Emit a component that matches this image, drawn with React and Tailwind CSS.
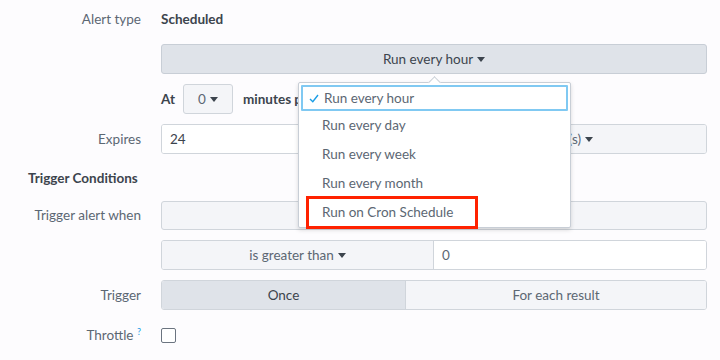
import React from "react";

const Caret = () => (
  <svg width="8" height="5" viewBox="0 0 8 5" className="inline-block ml-[4px] align-middle">
    <path d="M0 0 L8 0 L4 5 Z" fill="#3c444d" />
  </svg>
);

function Row({ label, children }) {
  return (
    <div className="flex items-center h-[30px]">
      <div className="w-[141px] text-right text-[#5c6773]">{label}</div>
      <div className="ml-[20px] w-[546px] h-full flex items-center">{children}</div>
    </div>
  );
}

export default function App() {
  return (
    <div
      className="relative w-[720px] h-[360px] bg-[#fdfcfe] overflow-hidden text-[13.5px] text-[#5c6773]"
      style={{ fontFamily: "Lato, 'Open Sans', sans-serif" }}
    >
      <div className="flex flex-col gap-[10px] pt-[4px]">
        <Row label="Alert type">
          <span className="font-bold text-[#3c444d]">Scheduled</span>
        </Row>
        <Row label="">
          <div className="w-full h-full rounded-[3px] border border-[#c8ced6] bg-[#dfe3e9] flex items-center justify-center text-[#3c444d]">
            Run every hour <Caret />
          </div>
        </Row>
        <Row label="">
          <span className="font-bold text-[#3c444d]">At</span>
          <div className="ml-[8px] w-[50px] h-full rounded-[3px] border border-[#d0d5db] bg-[#f4f5f8] flex items-center justify-center text-[#5c6773]">
            0 <Caret />
          </div>
          <span className="ml-[10px] font-bold text-[#3c444d]">minutes past the hour</span>
        </Row>
        <Row label="Expires">
          <div className="w-full h-full rounded-[3px] border border-[#d0d5db] flex overflow-hidden">
            <div className="w-[271px] bg-white flex items-center pl-[8px] text-[#3c444d]">24</div>
            <div className="flex-1 bg-[#f4f5f8] border-l border-[#d0d5db] flex items-center justify-center pr-[6px]">hour(s) <Caret /></div>
          </div>
        </Row>
        <div className="flex items-center h-[28px] -mb-[2px]">
          <div className="pl-[28px] font-bold text-[#3c444d]">Trigger Conditions</div>
        </div>
        <Row label="Trigger alert when">
          <div className="w-full h-[29px] rounded-[3px] border border-[#d0d5db] bg-[#f4f5f8] flex items-center justify-center">
            Number of Results <Caret />
          </div>
        </Row>
        <Row label="">
          <div className="w-full h-full rounded-[3px] border border-[#d0d5db] flex overflow-hidden">
            <div className="w-[271px] bg-[#f4f5f8] flex items-center justify-center">is greater than <Caret /></div>
            <div className="flex-1 bg-white border-l border-[#d0d5db] flex items-center pl-[8px]">0</div>
          </div>
        </Row>
        <Row label="Trigger">
          <div className="w-full h-full rounded-[3px] border border-[#d0d5db] flex overflow-hidden">
            <div className="w-[243px] bg-[#dfe3e9] flex items-center justify-center text-[#3c444d]">Once</div>
            <div className="flex-1 bg-[#f4f5f8] border-l border-[#d0d5db] flex items-center justify-center">For each result</div>
          </div>
        </Row>
        <Row label={<>Throttle <sup className="text-[#1a9ee6] text-[9px]">?</sup></>}>
          <div className="w-[15px] h-[15px] rounded-[2px] border border-[#6b7480] bg-white" />
        </Row>
      </div>

      {/* dropdown */}
      <div className="absolute left-[298px] top-[82px] w-[273px] h-[146px] bg-white border border-[#c8ced6] rounded-[2px] shadow-[0_2px_4px_rgba(0,0,0,0.15)]">
        <div className="absolute -top-[5px] left-[131px] w-[9px] h-[9px] rotate-45 bg-white border-l border-t border-[#c8ced6]" />
        <div className="relative pt-[2px] px-[2px]">
          <div className="h-[26px] border-2 border-[#80c9f2] rounded-[1px] flex items-center pl-[6px] text-[#5c6773]">
            <svg width="10" height="9" viewBox="0 0 10 9" className="mr-[5px]">
              <path d="M1 5 L3.8 7.8 L9 1" fill="none" stroke="#1a9ee6" strokeWidth="1.4" />
            </svg>
            <span>Run every hour</span>
          </div>
          <div className="h-[29px] flex items-center pl-[21px]">Run every day</div>
          <div className="h-[29px] flex items-center pl-[21px]">Run every week</div>
          <div className="h-[29px] flex items-center pl-[21px]">Run every month</div>
          <div className="h-[29px] flex items-center pl-[21px]">Run on Cron Schedule</div>
        </div>
        <div className="absolute left-[7px] top-[113px] w-[172px] h-[33px] border-[3px] border-[#ff2200]" />
      </div>
    </div>
  );
}
